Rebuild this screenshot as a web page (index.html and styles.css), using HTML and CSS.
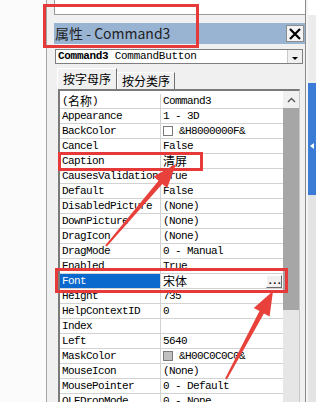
FILE: index.html
```html
<!DOCTYPE html>
<html lang="zh">
<head>
	<meta charset="UTF-8">
	<title>属性 - Command3</title>
	<link rel="stylesheet" href="styles.css">
</head>
<body>
	<div class="screen">
		<div class="gutter"></div>
		<div class="panel">
			<div class="topbox"></div>
			<div class="titlebar">
				<span class="title">属性 - Command3</span>
				<span class="close">
					<svg width="12" height="12" viewBox="0 0 12 12"><path d="M1 1L11 11M11 1L1 11" stroke="#000" stroke-width="2.2" fill="none"/></svg>
				</span>
			</div>
			<div class="combo">
				<span class="combo-text"><b>Command3</b> CommandButton</span>
				<span class="drop"><i></i></span>
			</div>
			<div class="tabs">
				<div class="tab active">按字母序</div>
				<div class="tab">按分类序</div>
			</div>
			<div class="grid">
				<div class="rows">
					<div class="row"><div class="name">(<span class="cjk">名称</span>)</div><div class="val">Command3</div></div>
					<div class="row"><div class="name">Appearance</div><div class="val">1 - 3D</div></div>
					<div class="row"><div class="name">BackColor</div><div class="val"><span class="swatch"></span>&amp;H8000000F&amp;</div></div>
					<div class="row"><div class="name">Cancel</div><div class="val">False</div></div>
					<div class="row"><div class="name">Caption</div><div class="val"><span class="cjk">清屏</span></div></div>
					<div class="row"><div class="name">CausesValidation</div><div class="val">True</div></div>
					<div class="row"><div class="name">Default</div><div class="val">False</div></div>
					<div class="row"><div class="name">DisabledPicture</div><div class="val">(None)</div></div>
					<div class="row"><div class="name">DownPicture</div><div class="val">(None)</div></div>
					<div class="row"><div class="name">DragIcon</div><div class="val">(None)</div></div>
					<div class="row"><div class="name">DragMode</div><div class="val">0 - Manual</div></div>
					<div class="row"><div class="name">Enabled</div><div class="val">True</div></div>
					<div class="row selected"><div class="name">Font</div><div class="val"><span class="cjk">宋体</span><span class="dots">...</span></div></div>
					<div class="row"><div class="name">Height</div><div class="val">735</div></div>
					<div class="row"><div class="name">HelpContextID</div><div class="val">0</div></div>
					<div class="row"><div class="name">Index</div><div class="val"></div></div>
					<div class="row"><div class="name">Left</div><div class="val">5640</div></div>
					<div class="row"><div class="name">MaskColor</div><div class="val"><span class="swatch gray"></span>&amp;H00C0C0C0&amp;</div></div>
					<div class="row"><div class="name">MouseIcon</div><div class="val">(None)</div></div>
					<div class="row"><div class="name">MousePointer</div><div class="val">0 - Default</div></div>
					<div class="row"><div class="name">OLEDropMode</div><div class="val">0 - None</div></div>
				</div>
				<div class="scroll">
					<div class="sb-up">
						<svg width="9" height="6" viewBox="0 0 9 6"><path d="M1 5L4.5 1.5L8 5" stroke="#555" stroke-width="1.4" fill="none"/></svg>
					</div>
					<div class="sb-thumb"></div>
					<div class="sb-track"></div>
				</div>
			</div>
		</div>
		<div class="side">
			<div class="s-top"></div>
			<div class="s-mid"></div>
			<div class="s-blue"><i></i></div>
			<div class="s-bot"></div>
		</div>
	</div>

	<div class="mark mark-title"></div>
	<div class="mark mark-caption"></div>
	<div class="mark mark-font"></div>

	<svg class="arrows" width="316" height="402" viewBox="0 0 316 402">
		<polygon points="105.2,245.4 106.8,246.6 162.3,183.9 167.2,188.1 176,164 153.6,176.5 158.5,180.7" fill="#e8403b"/>
		<polygon points="225.1,378.5 226.9,379.5 263.9,313.4 269.6,316.4 273,291 253.8,308 259.5,311" fill="#e8403b"/>
	</svg>
</body>
</html>
```

FILE: styles.css
```css
*{
	margin: 0;
	padding: 0;
	box-sizing: border-box;
}
body{
	width: 316px;
	height: 402px;
	overflow: hidden;
	position: relative;
	background: #fbfbfb;
	font-family: "Liberation Mono", "Noto Sans CJK SC", monospace;
	color: #000;
}
.screen{display: flex;height: 402px;}
.gutter{width: 46px;background: #fbfbfb;}

.panel{
	width: 260px;
	background: #f0f0f0;
	border-left: 1px solid #a6a6a6;
	border-right: 1px solid #8a8a8a;
	padding-left: 7px;
	display: flex;
	flex-direction: column;
}
.topbox{
	height: 15px;
	background: #fff;
	border-left: 1px solid #9a9a9a;
	border-bottom: 1px solid #9a9a9a;
}
.titlebar{
	margin-top: 8px;
	height: 21px;
	background: #99b4d3;
	display: flex;
	align-items: center;
	justify-content: space-between;
	padding: 0 1px;
}
.title{
	font-family: "Noto Sans CJK SC", sans-serif;
	font-size: 14px;
	color: #222;
	line-height: 21px;
}
.close{
	width: 18px;
	height: 17px;
	background: #f4f4f4;
	border: 1px solid #8d8d8d;
	display: flex;
	align-items: center;
	justify-content: center;
}

.combo{
	margin: 5px 2px 0 1px;
	height: 15px;
	background: #fff;
	border: 1px solid #7f7f7f;
	display: flex;
	align-items: center;
	justify-content: space-between;
}
.combo-text{
	font-size: 11px;
	letter-spacing: -0.3px;
	line-height: 13px;
	padding-left: 2px;
	white-space: nowrap;
}
.drop{
	width: 15px;
	height: 13px;
	background: #f0f0f0;
	border-left: 1px solid #c8c8c8;
	display: flex;
	align-items: center;
	justify-content: center;
}
.drop i{
	border-left: 3px solid transparent;
	border-right: 3px solid transparent;
	border-top: 3px solid #000;
	margin-top: 3px;
}

.tabs{
	margin-top: 4px;
	height: 21px;
	padding-left: 3px;
	display: flex;
	align-items: flex-end;
}
.tab{
	font-family: "Noto Sans CJK SC", sans-serif;
	font-size: 12px;
	height: 17px;
	line-height: 16px;
	width: 58px;
	padding-left: 4px;
	border-top: 1px solid #fff;
	border-left: 1px solid #fff;
	border-right: 1px solid #707070;
}
.tab.active{
	height: 21px;
	line-height: 20px;
	width: 60px;
	padding-left: 5px;
}

.grid{
	margin-left: 4px;
	width: 242px;
	flex: 1;
	background: #fff;
	border-top: 2px solid #7a7a7a;
	border-left: 2px solid #7a7a7a;
	border-right: 1px solid #c8c8c8;
	display: flex;
	overflow: hidden;
}
.rows{width: 223px;padding-top: 3px;}
.row{
	height: 15px;
	border-bottom: 1px solid #d2d2d2;
	display: flex;
	font-size: 11px;
	letter-spacing: -0.6px;
	line-height: 14px;
	white-space: nowrap;
}
.name{
	width: 101px;
	height: 14px;
	border-right: 1px solid #d2d2d2;
	padding-left: 2px;
	display: flex;
	align-items: center;
}
.val{
	flex: 1;
	height: 14px;
	padding-left: 2px;
	display: flex;
	align-items: center;
}
.cjk{
	font-family: "Noto Sans CJK SC", sans-serif;
	font-size: 12px;
	letter-spacing: 0;
	line-height: 14px;
}
.selected .name{background: #0b68cc;color: #fff;}
.dots{
	margin-left: auto;
	margin-right: 1px;
	width: 16px;
	height: 13px;
	background: #f0f0f0;
	border-top: 1px solid #fff;
	border-left: 1px solid #fff;
	border-right: 1px solid #696969;
	border-bottom: 1px solid #696969;
	font-weight: bold;
	font-size: 10px;
	letter-spacing: -1.5px;
	line-height: 12px;
	text-align: center;
}
.swatch{
	width: 10px;
	height: 10px;
	border: 1px solid #7a7a7a;
	background: #fff;
	margin-right: 6px;
}
.swatch.gray{background: #c0c0c0;}

.scroll{width: 16px;display: flex;flex-direction: column;}
.sb-up{
	height: 17px;
	background: #f0f0f0;
	display: flex;
	align-items: center;
	justify-content: center;
}
.sb-thumb{height: 202px;background: #a6a6a6;}
.sb-track{flex: 1;background: #e6e6e6;}

.side{
	width: 10px;
	border-left: 2px solid #f4f4f4;
	display: flex;
	flex-direction: column;
}
.s-top{height: 15px;background: #fff;}
.s-mid{height: 68px;background: #ececec;}
.s-blue{
	height: 112px;
	background: #3a7bd5;
	padding-top: 60px;
	padding-left: 2px;
}
.s-blue i{
	display: block;
	width: 0;
	border-top: 3px solid transparent;
	border-bottom: 3px solid transparent;
	border-right: 4px solid #fff;
}
.s-bot{flex: 1;background: #e4e4e4;}

.mark{
	position: absolute;
	border: 3px solid #e5393a;
}
.mark-title{left: 43px;top: 4px;width: 156px;height: 44px;}
.mark-caption{left: 58px;top: 152px;width: 145px;height: 19px;}
.mark-font{left: 55px;top: 268px;width: 233px;height: 25px;}

.arrows{position: absolute;left: 0;top: 0;}
```
